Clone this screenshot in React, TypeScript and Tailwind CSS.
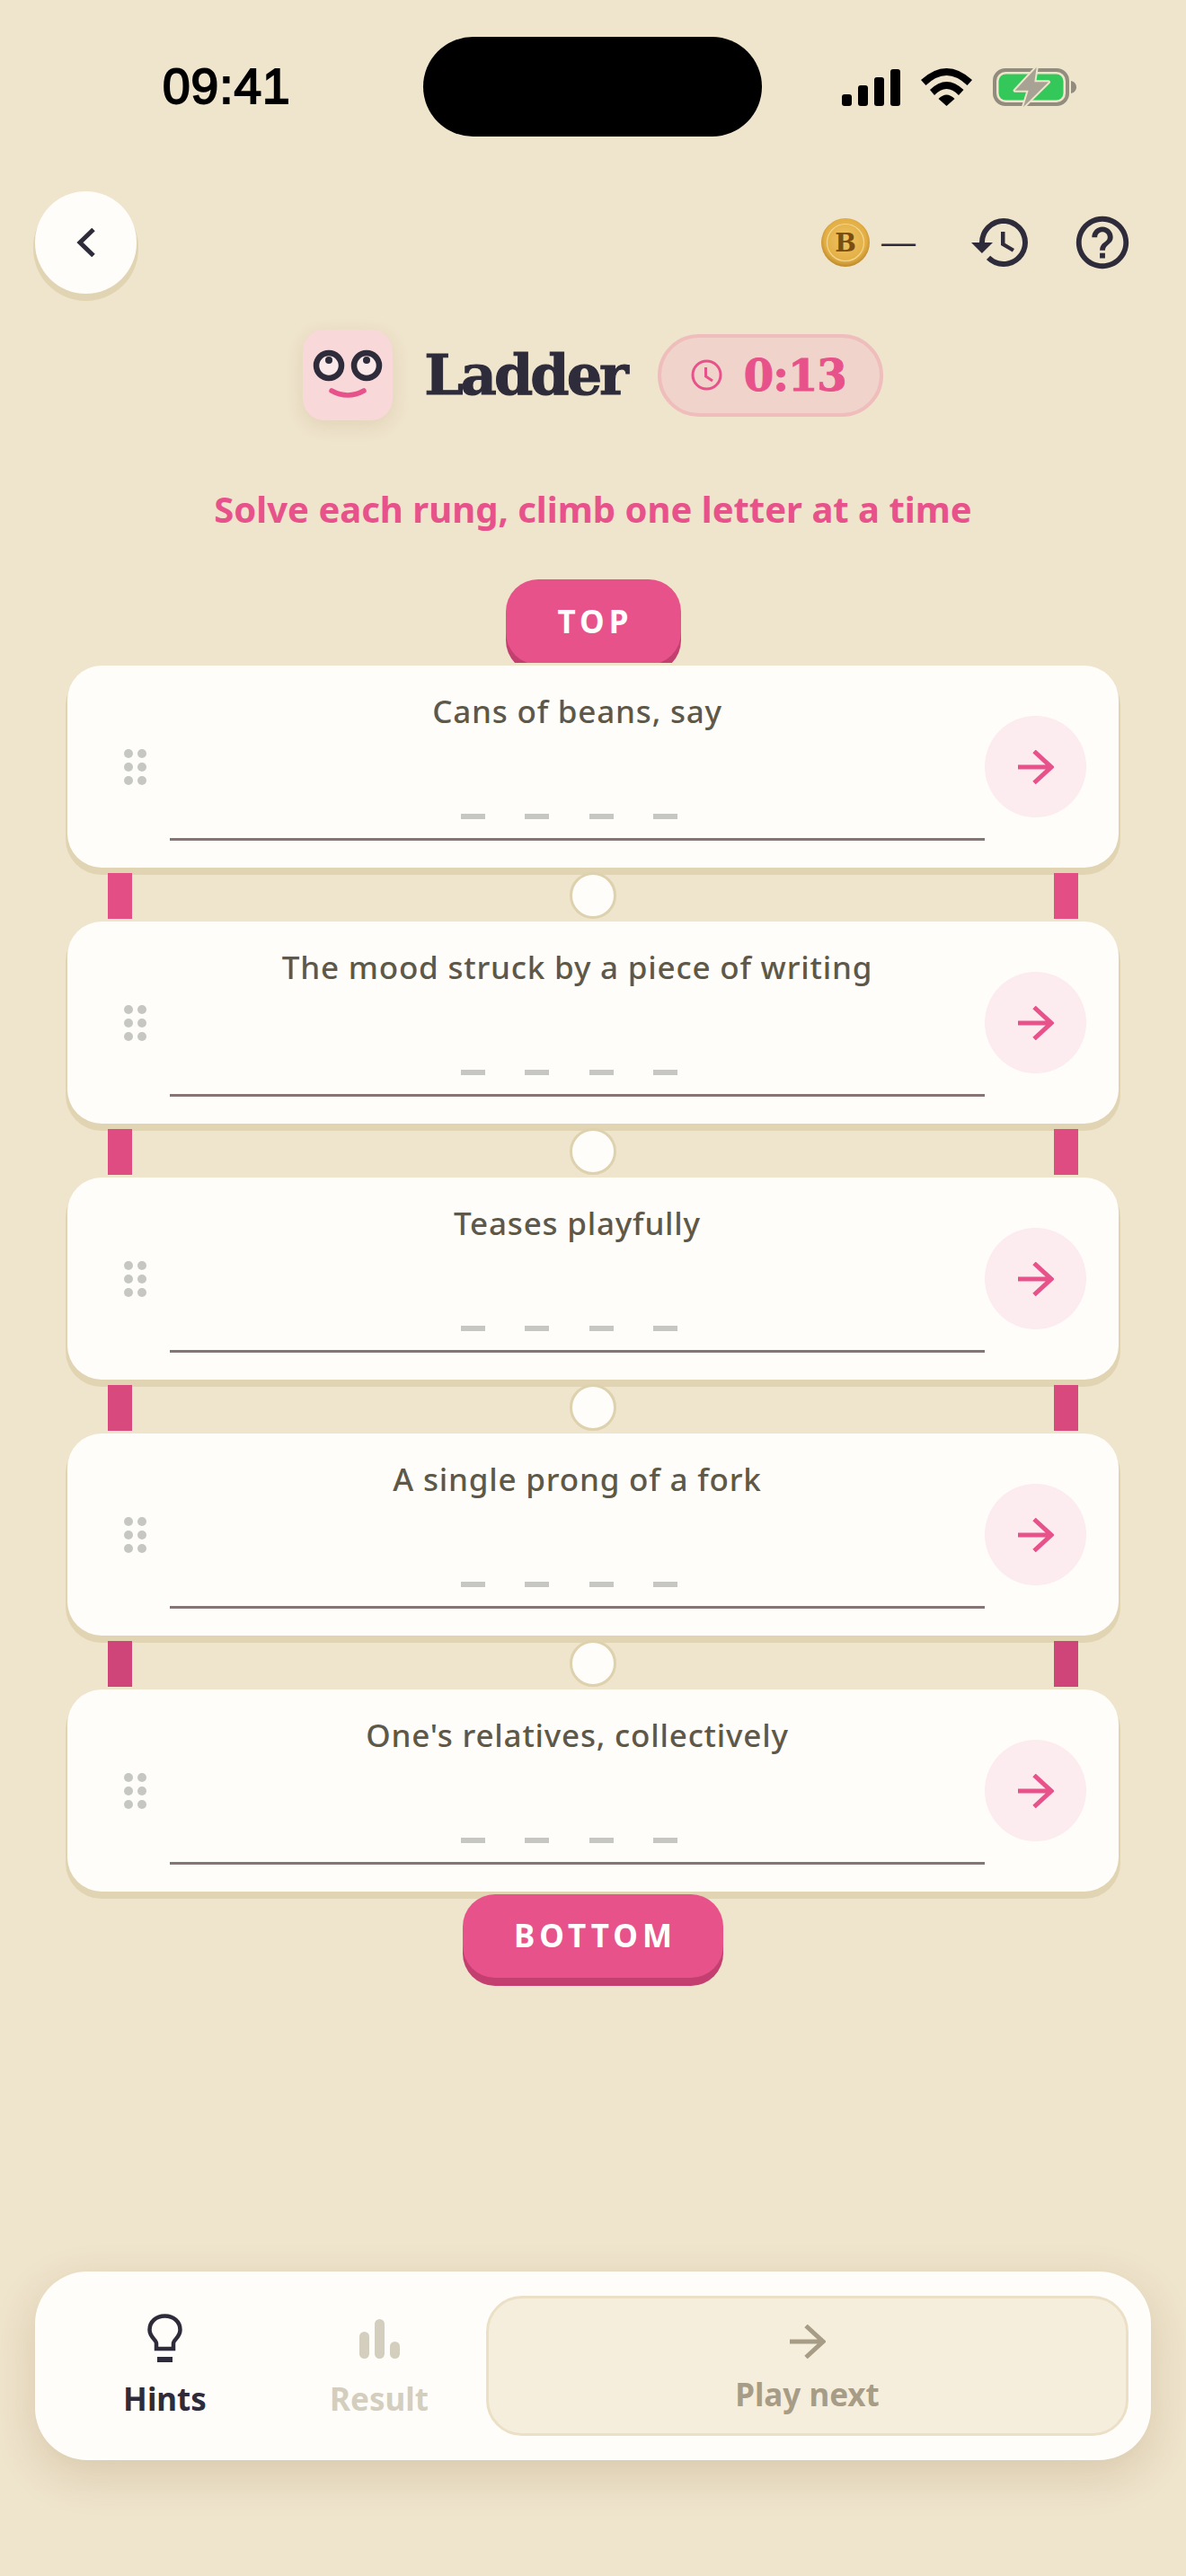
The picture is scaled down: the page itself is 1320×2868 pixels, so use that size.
import React from "react";
import { MdHistory, MdHelpOutline } from "react-icons/md";

const sans = "font-['Noto_Sans',sans-serif]";

const rungs = [
  { clue: "Cans of beans, say", rail: "bg-[#e34f84]" },
  { clue: "The mood struck by a piece of writing", rail: "bg-[#de4c81]" },
  { clue: "Teases playfully", rail: "bg-[#d8497e]" },
  { clue: "A single prong of a fork", rail: "bg-[#cf4579]" },
  { clue: "One's relatives, collectively", rail: "" },
];

const Arrow = ({ className }: { className: string }) => (
  <svg viewBox="0 0 40 38" fill="none" stroke="currentColor" strokeWidth="5" className={className}>
    <path d="M0 19H37M18 1.5L37 19L18 36.5" />
  </svg>
);

const StatusIcons = () => (
  <div className="flex items-center gap-[23px] pl-[89px]">
    <div className="flex h-[42px] items-end gap-[7px]">
      <div className="h-[13px] w-[11px] rounded-[3px] bg-black" />
      <div className="h-[23px] w-[11px] rounded-[3px] bg-black" />
      <div className="h-[32px] w-[11px] rounded-[3px] bg-black" />
      <div className="h-[41px] w-[11px] rounded-[3px] bg-black" />
    </div>
    <svg viewBox="0 0 57 42" className="h-[42px] w-[57px]" fill="#000">
      <path d="M0 13Q28.5-13 57 13L51.5 19Q28.5-3 5.500 19Z" />
      <path d="M10 24Q28.500 6 47.500 24L42 30Q28.500 16 15 30Z" />
      <path d="M19.500 34Q28.500 25 37.500 34L28.500 42Z" />
    </svg>
    <svg viewBox="0 0 93 46" className="h-[46px] w-[93px]">
      <rect x="2" y="4" width="81" height="38" rx="12" fill="none" stroke="#918c7e" strokeWidth="4" />
      <rect x="6.500" y="8.500" width="72" height="29" rx="8" fill="#34c759" />
      <path d="M87 16C91 17 93 20 93 23C93 26 91 29 87 30Z" fill="#918c7e" />
      <path
        d="M48.700 1L24.700 26.700H39.700L34 45L62 17.300H46.300Z"
        fill="#a8a294"
        stroke="#efe4cc"
        strokeWidth="4"
        paintOrder="stroke"
        strokeLinejoin="round"
      />
    </svg>
  </div>
);

const Coin = () => (
  <svg viewBox="0 0 54 54" className="h-[54px] w-[54px]">
    <defs>
      <radialGradient id="coinFill" cx="50%" cy="45%" r="55%">
        <stop offset="0%" stopColor="#efc563" />
        <stop offset="78%" stopColor="#e3ae45" />
        <stop offset="100%" stopColor="#bd8a2b" />
      </radialGradient>
    </defs>
    <circle cx="27" cy="27" r="27" fill="url(#coinFill)" />
    <circle cx="27" cy="27" r="20.500" fill="none" stroke="#f3d78f" strokeWidth="1.200" />
    <text x="27" y="37" textAnchor="middle" fontFamily="DejaVu Serif" fontWeight="700" fontSize="28" fill="#7a4e10">
      B
    </text>
  </svg>
);

const Face = () => (
  <div className="flex h-[101px] w-[100px] items-center justify-center rounded-[24px] bg-[#f8d8d9] shadow-[0_6px_20px_rgba(120,90,40,0.12)]">
    <svg viewBox="0 0 100 101" className="h-[101px] w-[100px]">
      <circle cx="29" cy="40" r="14" fill="#fbe9e9" stroke="#2e2b3a" strokeWidth="6.500" />
      <circle cx="71" cy="40" r="14" fill="#fbe9e9" stroke="#2e2b3a" strokeWidth="6.500" />
      <circle cx="29" cy="34" r="4" fill="#2e2b3a" />
      <circle cx="71" cy="34" r="4" fill="#2e2b3a" />
      <path d="M32 68Q50 78 68 68" fill="none" stroke="#e8528a" strokeWidth="5.500" strokeLinecap="round" />
    </svg>
  </div>
);

const Rung = ({ clue }: { clue: string }) => (
  <div className="flex h-[225px] items-center rounded-[38px] bg-[#fffdf9] pr-[36px] shadow-[0_6px_0_2px_#e0d4b2]">
    <div className="flex w-[114px] justify-center pl-[36px]">
      <div className="grid grid-cols-2 gap-x-[5px] gap-y-[5px]">
        {[0, 1, 2, 3, 4, 5].map((n) => (
          <div key={n} className="h-[10px] w-[10px] rounded-full bg-[#c6c6c2]" />
        ))}
      </div>
    </div>
    <div className="flex h-full flex-1 flex-col items-center pt-[29px]">
      <div className={`${sans} h-[44px] text-[35px] font-medium leading-[44px] tracking-[0.8px] text-[#5e5849]`}>{clue}</div>
      <div className="mt-[92px] flex h-[30px] w-full justify-center gap-[44.500px] border-b-[3px] border-[#857675] pr-[18px]">
        {[0, 1, 2, 3].map((n) => (
          <div key={n} className="h-[6px] w-[27px] bg-[#c6c6c2]" />
        ))}
      </div>
    </div>
    <div className="flex h-[113px] w-[113px] items-center justify-center rounded-full bg-[#fcebef] text-[#e8528a]">
      <Arrow className="h-[38px] w-[40px]" />
    </div>
  </div>
);

export default function App() {
  return (
    <div className="flex min-h-[2868px] w-[1320px] flex-col overflow-hidden bg-[#efe4cc]">
      <div className="flex h-[152px] items-center pt-[41px]">
        <div className="w-[471px] pl-[181px] font-['Liberation_Sans',sans-serif] text-[55px] leading-none tracking-[1px] text-black [-webkit-text-stroke:2px_black]">
          09:41
        </div>
        <div className="h-[111px] w-[377px] rounded-full bg-black" />
        <StatusIcons />
      </div>

      <div className="mt-[61px] flex h-[114px] items-center justify-between pl-[39px] pr-[58px]">
        <button className="flex h-[114px] w-[113px] items-center justify-center rounded-full bg-[#fffdf9] shadow-[0_6px_0_2px_#e0d4b2]">
          <svg viewBox="0 0 22 32" fill="none" stroke="#2e2b3a" strokeWidth="5" className="h-[32px] w-[22px]">
            <path d="M19 1.500L4 16L19 30.500" />
          </svg>
        </button>
        <div className="flex items-center">
          <Coin />
          <div className="ml-[13px] font-['Liberation_Sans',sans-serif] text-[38px] leading-none text-[#2e2b3a]">—</div>
          <MdHistory className="ml-[59px] text-[72px] text-[#2e2b3a]" />
          <MdHelpOutline className="ml-[42px] text-[70px] text-[#2e2b3a]" />
        </div>
      </div>

      <div className="mt-[40px] flex h-[101px] items-center justify-center gap-[35px]">
        <Face />
        <h1 className="font-['DejaVu_Serif',serif] text-[62px] font-bold leading-none tracking-[-3px] text-[#2e2b3a] [-webkit-text-stroke:1px_#2e2b3a]">
          Ladder
        </h1>
        <div className="flex h-[92px] w-[251px] items-center gap-[24px] rounded-full border-[4px] border-[#efbdbb] bg-[#f0d4cc] pl-[33px]">
          <svg viewBox="0 0 35 35" fill="none" stroke="#e8528a" strokeWidth="3" className="h-[35px] w-[35px]">
            <circle cx="17.500" cy="17.500" r="15.500" />
            <path d="M16.500 9V19L24 24" />
          </svg>
          <span className="font-['DejaVu_Serif',serif] text-[48px] font-bold leading-none tracking-[-1px] text-[#e8528a] [-webkit-text-stroke:1px_#e8528a]">
            0:13
          </span>
        </div>
      </div>

      <div className={`${sans} mt-[74px] h-[50px] text-center text-[40px] font-bold leading-[50px] text-[#e8528a]`}>
        Solve each rung, climb one letter at a time
      </div>

      <div className="mt-[53px] flex h-[93px] justify-center overflow-hidden">
        <div className={`${sans} flex h-[95px] w-[195px] items-center justify-center rounded-[36px] bg-[#e8528a] pl-[5px] text-[35px] font-bold tracking-[5px] text-white shadow-[0_9px_0_#c23f70]`}>
          TOP
        </div>
      </div>

      <div className="mx-[75px] mt-[3px] flex flex-col">
        {rungs.map((r, i) => (
          <React.Fragment key={r.clue}>
            <Rung clue={r.clue} />
            {i < rungs.length - 1 && (
              <div className="flex h-[60px] items-start justify-between px-[45px]">
                <div className={`mt-[6px] h-[51px] w-[27px] ${r.rail}`} />
                <div className="mt-[5px] h-[52px] w-[52px] rounded-full border-[3px] border-[#ddd1ae] bg-[#fffdf9]" />
                <div className={`mt-[6px] h-[51px] w-[27px] ${r.rail}`} />
              </div>
            )}
          </React.Fragment>
        ))}
      </div>

      <div className="relative mt-[3px] flex justify-center">
        <div className={`${sans} flex h-[93px] w-[290px] items-center justify-center rounded-[36px] bg-[#e8528a] pl-[5px] text-[35px] font-bold tracking-[5px] text-white shadow-[0_9px_0_#c23f70]`}>
          BOTTOM
        </div>
      </div>

      <div className="mx-[39px] mt-[327px] flex h-[210px] items-center rounded-[58px] bg-[#fffdf9] px-[25px] shadow-[0_16px_48px_rgba(110,80,30,0.18)]">
        <div className="flex h-[156px] w-[239px] flex-col items-center pt-[20px]">
          <svg viewBox="0 0 39 54" fill="none" stroke="#2e2b3a" strokeWidth="4.500" className="h-[54px] w-[39px]">
            <path d="M10 39V33C10 29 2.500 26 2.500 18C2.500 8.500 10 2.500 19.500 2.500C29 2.500 36.500 8.500 36.500 18C36.500 26 29 29 29 33V39Z" />
            <path d="M11 51H28" strokeWidth="6" />
          </svg>
          <span className={`${sans} mt-[21px] text-[35px] font-bold leading-[40px] text-[#2e2b3a]`}>Hints</span>
        </div>
        <div className="flex h-[156px] w-[238px] flex-col items-center pt-[26px]">
          <div className="flex h-[44px] items-end gap-[6px]">
            <div className="h-[30px] w-[11px] rounded-full bg-[#d3cebd]" />
            <div className="h-[44px] w-[11px] rounded-full bg-[#d3cebd]" />
            <div className="h-[19px] w-[11px] rounded-full bg-[#d3cebd]" />
          </div>
          <span className={`${sans} mt-[25px] text-[35px] font-bold leading-[40px] text-[#d3cebd]`}>Result</span>
        </div>
        <div className="flex h-[156px] flex-1 flex-col items-center rounded-[40px] border-[3px] border-[#ebe0c6] bg-[#f6eedc] pt-[29px] text-[#a79c86]">
          <Arrow className="h-[38px] w-[40px]" />
          <span className={`${sans} mt-[20px] text-[35px] font-bold leading-[40px]`}>Play next</span>
        </div>
      </div>
    </div>
  );
}
